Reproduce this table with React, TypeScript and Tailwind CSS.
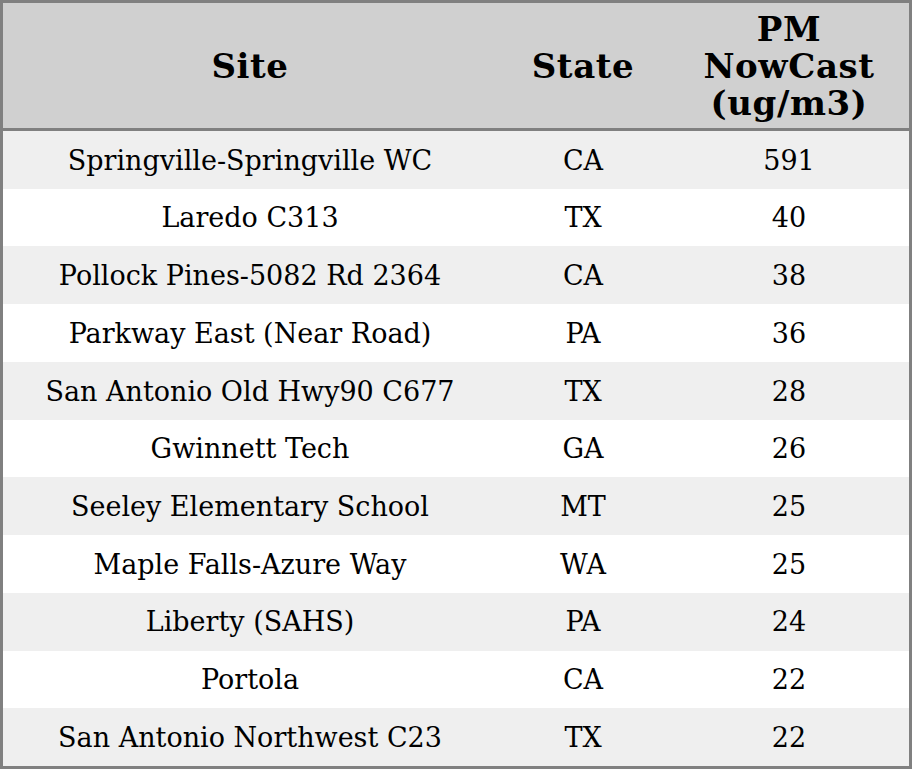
const rows: [string, string, string][] = [
  ["Springville-Springville WC", "CA", "591"],
  ["Laredo C313", "TX", "40"],
  ["Pollock Pines-5082 Rd 2364", "CA", "38"],
  ["Parkway East (Near Road)", "PA", "36"],
  ["San Antonio Old Hwy90 C677", "TX", "28"],
  ["Gwinnett Tech", "GA", "26"],
  ["Seeley Elementary School", "MT", "25"],
  ["Maple Falls-Azure Way", "WA", "25"],
  ["Liberty (SAHS)", "PA", "24"],
  ["Portola", "CA", "22"],
  ["San Antonio Northwest C23", "TX", "22"],
];

export default function App() {
  return (
    <div
      className="w-[912px] h-[769px] border-[3px] border-[#808080] bg-white text-black flex flex-col"
      style={{ fontFamily: '"DejaVu Serif", serif' }}
    >
      <div className="grid grid-cols-[494px_172px_240px] h-[128px] shrink-0 bg-[#d0d0d0] border-b-[3px] border-[#808080] font-bold text-[34px] leading-[37px] tracking-[0.6px]">
        <div className="flex items-center justify-center pt-[2px]">Site</div>
        <div className="flex items-center justify-center pt-[2px]">State</div>
        <div className="flex items-center justify-center text-center pt-[2px]">
          PM
          <br />
          NowCast
          <br />
          (ug/m3)
        </div>
      </div>
      <div className="flex-1 flex flex-col text-[27px]">
        {rows.map(([site, state, value], i) => (
          <div
            key={i}
            className={`grid grid-cols-[494px_172px_240px] flex-1 items-center text-center pt-[2px] ${
              i % 2 === 0 ? "bg-[#efefef]" : "bg-white"
            }`}
          >
            <div>{site}</div>
            <div>{state}</div>
            <div>{value}</div>
          </div>
        ))}
      </div>
    </div>
  );
}
